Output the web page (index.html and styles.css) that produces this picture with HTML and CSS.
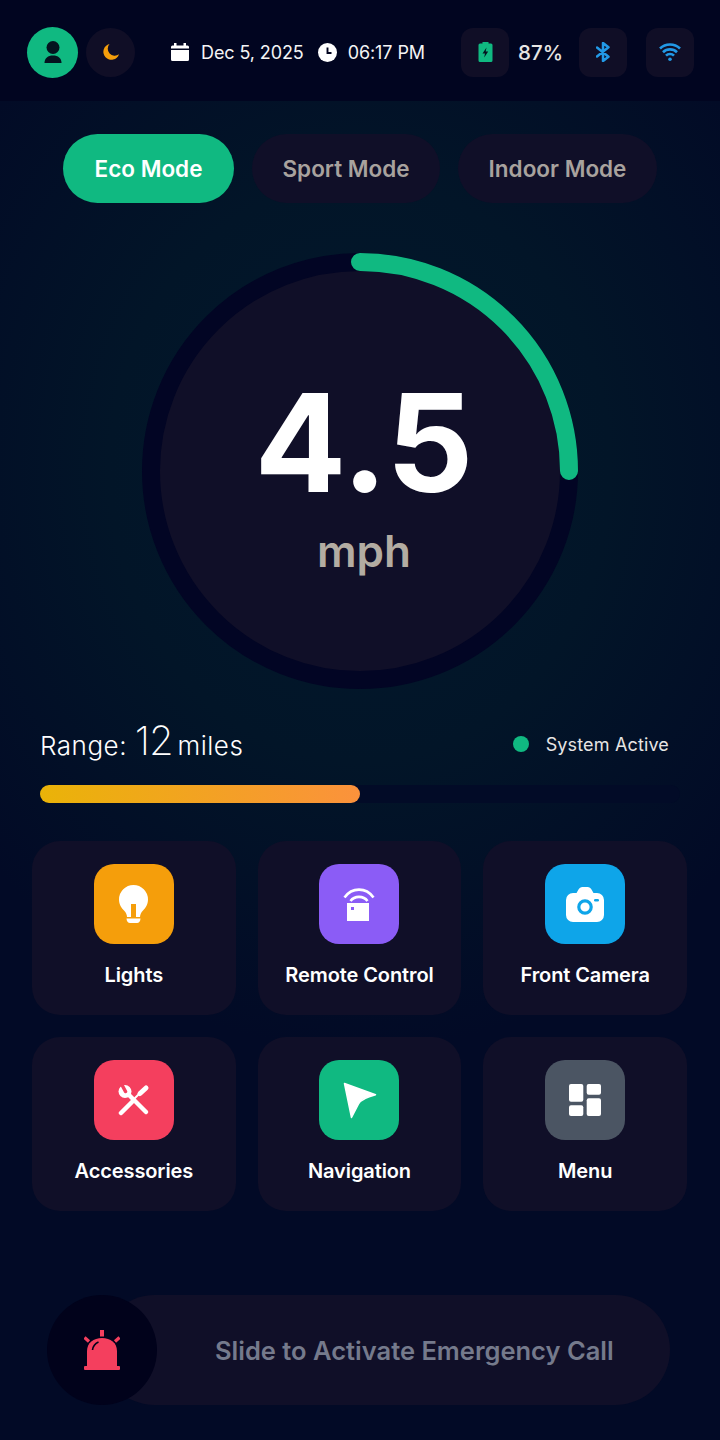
FILE: index.html
```html
<!DOCTYPE html>
<html lang="en">
<head>
<meta charset="utf-8">
<title>Scooter Dashboard</title>
<link rel="stylesheet" href="styles.css">
</head>
<body>
<div class="app">
  <header class="topbar">
    <div class="top-left">
      <div class="avatar">
        <svg width="18" height="22" viewBox="0 0 18 22"><circle cx="9" cy="6.500" r="6.500" fill="#04131f"/><path d="M.5 22c0-5 3.500-7.500 8.500-7.500s8.500 2.500 8.500 7.500z" fill="#04131f"/></svg>
      </div>
      <div class="theme-btn">
        <svg width="18" height="18" viewBox="0 0 18 18"><path d="M7.500 1A8 8 0 1 0 17 11.200 7 7 0 0 1 7.500 1z" fill="#f59e0b"/></svg>
      </div>
    </div>
    <div class="clock">
      <svg class="cal" width="18" height="18" viewBox="0 0 18 18"><path d="M0 7h18v9.500a1.500 1.500 0 0 1-1.500 1.500h-15A1.500 1.500 0 0 1 0 16.500zM0 5.500V4a1.500 1.500 0 0 1 1.500-1.500H3V0h2.500v2.500h7V0H15v2.500h1.500A1.500 1.500 0 0 1 18 4v1.500z" fill="#fff"/></svg>
      <span class="date">Dec 5, 2025</span>
      <svg class="clk" width="19" height="19" viewBox="0 0 19 19"><circle cx="9.500" cy="9.500" r="9.500" fill="#fff"/><path d="M9.500 4.500v5.500h4" fill="none" stroke="#02041f" stroke-width="1.900"/></svg>
      <span class="time">06:17 PM</span>
    </div>
    <div class="status">
      <div class="status-btn">
        <svg width="15" height="20" viewBox="0 0 15 20"><path d="M4.500 0h6v1.500h2.500a1.500 1.500 0 0 1 1.500 1.500v15.500a1.500 1.500 0 0 1-1.500 1.500H2A1.500 1.500 0 0 1 .5 18.500V3A1.500 1.500 0 0 1 2 1.500h2.500z" fill="#10b981"/><path d="M8.500 5.500 4.500 11.500h2.500l-.8 4 4-6H7.700z" fill="#04131f"/></svg>
      </div>
      <span class="battery">87%</span>
      <div class="status-btn">
        <svg width="14" height="20" viewBox="0 0 14 20"><path d="M1 5.500 12.500 14.700 7 19V1l5.500 4.300L1 14.500" fill="none" stroke="#2299e6" stroke-width="2.500" stroke-linejoin="round" stroke-linecap="round"/></svg>
      </div>
      <div class="status-btn">
        <svg width="22" height="18" viewBox="0 0 22 18"><g fill="none" stroke="#2299e6" stroke-width="2.600"><path d="M1 5.500a14.500 14.500 0 0 1 20 0"/><path d="M4 9.200a10 10 0 0 1 14 0"/><path d="M7 12.700a5.500 5.500 0 0 1 8 0"/></g><circle cx="11" cy="16.200" r="1.800" fill="#2299e6"/></svg>
      </div>
    </div>
  </header>

  <main class="content">
    <nav class="modes">
      <div class="mode mode-on">Eco Mode</div>
      <div class="mode">Sport Mode</div>
      <div class="mode">Indoor Mode</div>
    </nav>

    <section class="gauge">
      <svg class="gauge-svg" width="436" height="436" viewBox="0 0 436 436">
        <circle cx="218" cy="218" r="209" fill="#100f28" stroke="#020524" stroke-width="18"/>
        <path d="M218 9A209 209 0 0 1 427 218" fill="none" stroke="#10b981" stroke-width="18" stroke-linecap="round"/>
      </svg>
      <div class="gauge-text">
        <div class="speed">4.5</div>
        <div class="unit">mph</div>
      </div>
    </section>

    <section class="range">
      <div class="range-row">
        <div class="range-label">Range: <span class="range-num">12</span> miles</div>
        <div class="system"><i class="dot"></i>System Active</div>
      </div>
      <div class="range-track"><div class="range-fill" style="width:50%"></div></div>
    </section>

    <section class="grid">
      <div class="card">
        <div class="tile amber">
          <svg width="29" height="38" viewBox="0 0 29 38"><path d="M14.500 0A14.500 14.500 0 0 0 0 14.500C0 19.500 2.500 23 5 25.500 7 27.500 8 30 8 32H12V19H17V32H21C21 30 22 27.500 24 25.500 26.500 23 29 19.500 29 14.500A14.500 14.500 0 0 0 14.500 0Z" fill="#fff"/><path d="M7.500 33.500h14c0 2.500-1.500 4.500-3.500 4.500h-7c-2 0-3.500-2-3.500-4.500z" fill="#fff"/></svg>
        </div>
        <div class="card-label">Lights</div>
      </div>
      <div class="card">
        <div class="tile violet">
          <svg width="32" height="36" viewBox="0 0 32 36"><g fill="none" stroke="#fff" stroke-width="2.600"><path d="M1.500 11.500C9 1 23 1 30.500 11.500"/><path d="M7.500 15C11.500 9.500 20.500 9.500 24.500 15"/></g><path d="M4 17h22v18H4zM8 21v3H11V21z" fill="#fff" fill-rule="evenodd"/></svg>
        </div>
        <div class="card-label">Remote Control</div>
      </div>
      <div class="card">
        <div class="tile sky">
          <svg width="38" height="35" viewBox="0 0 38 35"><path d="M7 6h3.500l2-3.500C13.500 1 14.500 0 16.500 0h5c2 0 3 1 4 2.500l2 3.500H31a7 7 0 0 1 7 7v15a7 7 0 0 1-7 7H7a7 7 0 0 1-7-7V13a7 7 0 0 1 7-7z" fill="#fff"/><circle cx="19" cy="20" r="6.200" fill="#fff" stroke="#0ea5e9" stroke-width="3.200"/><rect x="28" y="12" width="5" height="2.500" rx="1.200" fill="#0ea5e9"/></svg>
        </div>
        <div class="card-label">Front Camera</div>
      </div>
      <div class="card">
        <div class="tile rose">
          <svg width="32" height="32" viewBox="0 0 32 32">
            <g fill="none" stroke="#fff" stroke-linecap="round">
              <path d="M8 8 28 28" stroke-width="4.500"/>
              <path d="M3 29 14 18" stroke-width="4.500"/>
              <path d="M17 14 22 9" stroke-width="2"/>
              <path d="M22 9.500 28 4" stroke-width="5"/>
            </g>
            <circle cx="7" cy="7.500" r="6.500" fill="#fff"/>
            <path d="M7.500 7.500 4 1" stroke="#f43f5e" stroke-width="3.500" stroke-linecap="round"/>
          </svg>
        </div>
        <div class="card-label">Accessories</div>
      </div>
      <div class="card">
        <div class="tile green">
          <svg width="36" height="37" viewBox="0 0 36 37"><path d="M3.500 1.500 34.500 12.800C24 15.500 19.500 18 17.500 22L10.500 35.500z" fill="#fff" stroke="#fff" stroke-width="1.500" stroke-linejoin="round"/></svg>
        </div>
        <div class="card-label">Navigation</div>
      </div>
      <div class="card">
        <div class="tile slate">
          <svg width="32" height="32" viewBox="0 0 32 32"><g fill="#fff"><rect width="14.300" height="17.700" rx="2"/><rect x="17.700" width="14.300" height="10.700" rx="2"/><rect y="21.300" width="14.300" height="10.700" rx="2"/><rect x="17.700" y="14.300" width="14.300" height="17.700" rx="2"/></g></svg>
        </div>
        <div class="card-label">Menu</div>
      </div>
    </section>

    <section class="slider">
      <div class="knob">
        <svg width="36" height="40" viewBox="0 0 36 40"><g fill="#f43f5e"><rect x="16" y="0" width="4" height="6.500"/><path d="M3 36.500V21C3 13 9.500 8 18 8S33 13 33 21v15.500z"/><rect y="36" width="36" height="4" rx="1"/></g><path d="M.5 7.500 5 11.500M35.500 7.500 31 11.500" stroke="#f43f5e" stroke-width="3.200" fill="none"/><path d="M8.500 20C9 16 11 13.500 14.500 12" fill="none" stroke="#01021b" stroke-width="1.600"/></svg>
      </div>
      <div class="slider-text">Slide to Activate Emergency Call</div>
    </section>
  </main>
</div>
</body>
</html>
```

FILE: styles.css
```css
* { margin: 0; padding: 0; box-sizing: border-box; }
html, body { height: 100%; }
body { background: #020420; font-family: "Inter", "Liberation Sans", sans-serif; color: #fff; }

.app { width: 720px; height: 1440px; overflow: hidden; display: flex; flex-direction: column; }

/* top bar */
.topbar { height: 101px; flex: none; display: flex; align-items: center; padding: 3px 26px 0 27px; background: #010520; }
.top-left { display: flex; align-items: center; gap: 8px; }
.avatar { width: 51px; height: 51px; border-radius: 50%; background: #10b981; display: flex; align-items: center; justify-content: center; }
.theme-btn { width: 49px; height: 49px; border-radius: 50%; background: #100e26; display: flex; align-items: center; justify-content: center; }
.clock { display: flex; align-items: center; margin-left: 36px; font-size: 18px; font-weight: 400; color: #f4f4f5; letter-spacing: -.1px; }
.date { margin-left: 12px; margin-right: 14px; }
.time { margin-left: 11px; }
.status { display: flex; align-items: center; margin-left: auto; }
.status-btn { width: 48px; height: 49px; border-radius: 12px; background: #100e26; display: flex; align-items: center; justify-content: center; }
.status-btn + .status-btn { margin-left: 19px; }
.battery { margin: 0 16px 0 9px; font-size: 20.500px; font-weight: 500; color: #e7e5e4; }

/* main */
.content { flex: 1; display: flex; flex-direction: column; background: radial-gradient(ellipse 500px 580px at 360px 370px, #02192d 0%, #021528 50%, #020a26 100%), #020926; }

.modes { display: flex; justify-content: center; gap: 18px; margin-top: 33px; }
.mode { height: 69px; padding: 0 30.500px; border-radius: 35px; background: #100f28; color: #a8a29e; font-size: 22.500px; font-weight: 600; display: flex; align-items: center; }
.mode-on { background: #10b981; color: #fff; padding: 0 31.500px; }

.gauge { display: grid; justify-content: center; align-items: center; margin-top: 50px; }
.gauge-svg { grid-area: 1 / 1; display: block; }
.gauge-text { grid-area: 1 / 1; text-align: center; padding: 18px 0 0 8px; }
.speed { font-size: 136px; line-height: 110px; font-weight: 700; color: #fff; }
.unit { font-size: 44px; line-height: 44px; font-weight: 600; color: #b3aca2; margin-top: 31px; }

.range { margin: 31px 40px 0; }
.range-row { display: flex; align-items: center; justify-content: space-between; height: 48px; padding-right: 11px; }
.range-label { font-size: 26px; line-height: 42px; align-self: flex-start; font-weight: 300; color: #fff; letter-spacing: .5px; }
.range-num { font-size: 40px; font-weight: 200; letter-spacing: -1px; margin-right: -3px; }
.system { display: flex; align-items: center; font-size: 18px; color: #e7e5e4; letter-spacing: .15px; }
.dot { width: 16px; height: 16px; border-radius: 50%; background: #10b981; margin-right: 17px; }
.range-track { height: 18px; margin-top: 17px; border-radius: 9px; background: #020b27; }
.range-fill { height: 100%; border-radius: 9px; background: linear-gradient(90deg, #eab308, #fb923c); }

.grid { display: grid; grid-template-columns: repeat(3, 1fr); gap: 22px; margin: 38px 33px 0 32px; }
.card { height: 174px; border-radius: 28px; background: #100f28; display: flex; flex-direction: column; align-items: center; padding-top: 23px; }
.tile { width: 80px; height: 80px; border-radius: 20px; display: flex; align-items: center; justify-content: center; }
.amber { background: #f59e0b; }
.violet { background: #8b5cf6; }
.sky { background: #0ea5e9; }
.rose { background: #f43f5e; }
.green { background: #10b981; }
.slate { background: #4b5563; }
.card-label { margin-top: 18px; font-size: 20px; line-height: 26px; font-weight: 600; color: #fff; letter-spacing: -.1px; white-space: nowrap; }

.slider { position: relative; display: flex; align-items: center; height: 110px; margin: 84px 50px 0 100px; border-radius: 55px; background: #100f28; }
.knob { position: absolute; left: -53px; top: 0; width: 110px; height: 110px; border-radius: 50%; background: #01021b; display: flex; align-items: center; justify-content: center; }
.slider-text { margin-left: 115px; font-size: 25.500px; font-weight: 600; color: #757a8c; white-space: nowrap; }
```
